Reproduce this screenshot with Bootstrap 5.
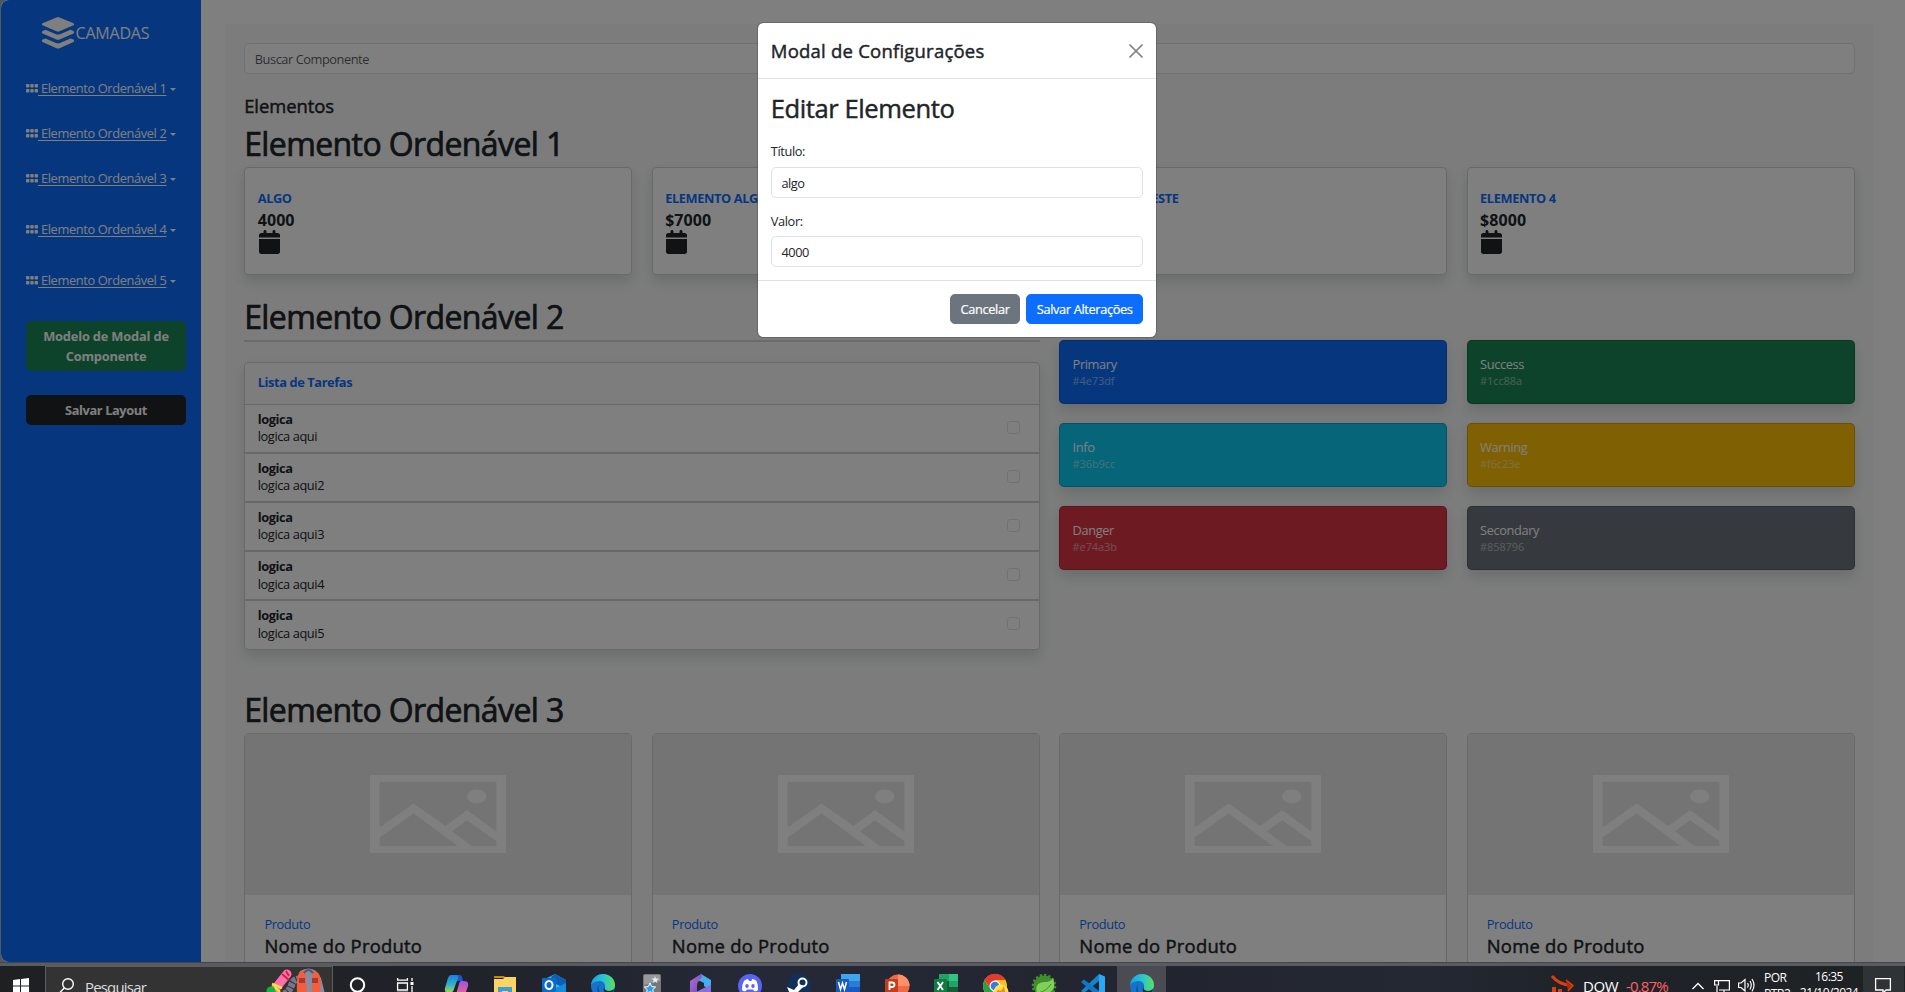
<!DOCTYPE html>
<html lang="pt-BR">
<head>
<meta charset="utf-8">
<title>Camadas</title>
<link rel="stylesheet" href="https://cdn.jsdelivr.net/npm/bootstrap@5.3.0/dist/css/bootstrap.min.css">
<style>
html{font-size:12.8px}
body{font-family:"Open Sans","Noto Sans",sans-serif;letter-spacing:-.03em;height:992px;overflow:hidden;background:#55565c}
.screen{height:962px;border-radius:8px 0 0 8px;margin-left:1px;background:#fff;position:relative;overflow:hidden}
.screen h1,.screen h2,.screen h5{-webkit-text-stroke:.45px currentColor}
.screen h1{font-size:32px;line-height:38.4px;letter-spacing:-.019em;margin:0;-webkit-text-stroke-width:.7px;height:42px}
.side{width:200px;flex:none;padding:16px 15px 0 25px;height:962px}
.brand-row{font-size:16px;height:34px;padding-left:14.5px;letter-spacing:-.012em}
.side-link{height:20px;color:#fff;white-space:nowrap;line-height:20px;margin-top:25px}
.side-link svg{margin-bottom:2px}
.side-link u{white-space:pre;text-underline-offset:2px;letter-spacing:-.028em}
.side-link.dropdown-toggle::after{margin-left:4px;border-top-width:3px;border-left-width:3px;border-right-width:3px;vertical-align:2px}
.side .btn{width:160px;letter-spacing:-.012em;line-height:20px;padding:4px 8px}
.side .btn-success{height:50px;margin-top:31px}
.side .btn-dark{height:30px;margin-top:24px;letter-spacing:-.03em}
.main-pad{width:1697px;flex:none;padding:24px}
.panel{height:1100px;padding:19px 9.6px 0}
.panel .row{--bs-gutter-x:19.2px}
.inner{padding:0 9.6px}
.form-control{letter-spacing:-.035em}
.search-box{height:31px}
.section-name{font-size:18.4px;line-height:21px;letter-spacing:-.003em;margin:20.5px 0 9.5px}
.stat{height:108px;padding:20px 12.5px;line-height:1}
.stat .name{font-weight:700;color:#0d6efd;height:21px;line-height:20px;text-transform:uppercase;letter-spacing:-.03em}
.stat .amount{font-size:16px;font-weight:700;line-height:21px;height:20px;letter-spacing:.005em;margin-top:2px}
.stat svg{display:block}
.rule{height:2px;background:#d5d6d8}
.tasks{height:288.5px}
.tasks .head{height:42px;flex:none;padding:0 12.5px;background:#fbfbfb;border-bottom:1px solid #cfcfcf}
.task{height:49.2px;flex:none;padding:6px 19px 0 12.5px;border-bottom:2px solid #d0d0d0;line-height:17.5px}
.task:last-child{border-bottom:0;height:46.5px}
.task .form-check-input{width:13px;height:13px;margin:10px 0 0}
.tone{height:64px;padding:14px 12.5px;line-height:19px}
.tone small{display:block;font-size:11px;line-height:13px;opacity:.5;letter-spacing:-.01em}
.ph{height:161px;background:#e9e9e9;border-radius:4px 4px 0 0;padding-top:41px}
.prod{height:330px}
.prod-body{padding:20px 19.2px}
.prod-body h5{font-size:18.4px;line-height:22px;letter-spacing:.014em;margin:1px 0 0}
.cfg{width:400px;max-width:none;margin:22px 0 0 756px}
.cfg .modal-content{height:316px}
.cfg .modal-header{height:56px;padding:0 12.8px}
.cfg h5{font-size:18.5px;letter-spacing:.012em;margin-bottom:0}
.cfg .modal-body{padding:14px 12.8px 0}
.cfg h2{font-size:25.6px;line-height:31px;letter-spacing:-.017em;margin-bottom:18px}
.cfg label{display:block;height:25px;line-height:19px}
.cfg .form-control{height:31px}
.cfg .modal-footer{height:57px;padding:0 12.8px;gap:6px}
.cfg .btn{height:30px;padding:0 9.6px;line-height:28px;letter-spacing:-.028em;-webkit-text-stroke:.2px #fff}
.dim{inset:0;background:rgba(0,0,0,.5);z-index:3}
.edge-line{height:4px;background:linear-gradient(#45464b 1px,#5a5b61 1px)}
.taskbar{height:26px;overflow:hidden;background:linear-gradient(90deg,#1f2022,#20232a 25%,#252937 40%,#22252f 60%,#242833 75%,#1f2329 82%,#1e2224);color:#fff;letter-spacing:0}
.taskbar svg{display:block;overflow:visible}
.slot{width:49px;height:26px;flex:none;padding-top:8px}
.slot svg{margin:0 auto}
.slot.on{background:#4b4c53}
.find{width:288px;height:26px;background:#333;border:1px solid #5c5c5c;border-bottom:0}
.tray{white-space:nowrap}
.tiny{font-size:12px;line-height:16px;letter-spacing:-.045em}
</style>
</head>
<body>
<svg width="0" height="0" class="position-absolute">
<defs>
<linearGradient id="ge" x1="0" y1="0" x2="1" y2="0"><stop offset="0" stop-color="#1b9de0"/><stop offset=".5" stop-color="#27c3d5"/><stop offset="1" stop-color="#5be05a"/></linearGradient>
<linearGradient id="gp" x1="0" y1="0" x2="1" y2="1"><stop offset="0" stop-color="#b36bd8"/><stop offset="1" stop-color="#6a48b0"/></linearGradient>
<linearGradient id="gc" x1="0" y1="0" x2="0" y2="1"><stop offset="0" stop-color="#1a7fe0"/><stop offset=".55" stop-color="#2fb5c9"/><stop offset="1" stop-color="#b5d438"/></linearGradient>
<linearGradient id="gd" x1="0" y1="0" x2="0" y2="1"><stop offset="0" stop-color="#a24fe8"/><stop offset="1" stop-color="#fb6f75"/></linearGradient>
</defs>
<symbol id="grip" viewBox="0 0 12 9"><g fill="#fff"><rect width="3.4" height="3.6" rx=".8"/><rect x="4.3" width="3.4" height="3.6" rx=".8"/><rect x="8.6" width="3.4" height="3.6" rx=".8"/><rect y="5" width="3.4" height="3.6" rx=".8"/><rect x="4.3" y="5" width="3.4" height="3.6" rx=".8"/><rect x="8.6" y="5" width="3.4" height="3.6" rx=".8"/></g></symbol>
<symbol id="cal" viewBox="0 0 448 512"><path fill="#212529" d="M128 0c17.700 0 32 14.300 32 32V64H288V32c0-17.700 14.300-32 32-32s32 14.300 32 32V64h48c26.500 0 48 21.500 48 48v48H0V112C0 85.500 21.500 64 48 64H96V32c0-17.700 14.300-32 32-32zM0 192H448V464c0 26.500-21.500 48-48 48H48c-26.500 0-48-21.500-48-48V192z"/></symbol>
<symbol id="pic" viewBox="0 0 381 233" preserveAspectRatio="none"><path fill="#fff" fill-rule="evenodd" d="M0 0H381V233H0zM27 20V157L122 85L211 152L272 105L354 169V20zM27 187V212H246L122 114zM284 212H354V197L272 135L229 168z"/><ellipse cx="299" cy="64" rx="27" ry="21" fill="#fff"/></symbol>
<symbol id="edge" viewBox="0 0 24 24"><circle cx="12" cy="12" r="12" fill="#1673c8"/><path fill="url(#ge)" d="M0 11C1 4 6 0 12 0c7 0 12 5 12 11 0 4-3 6-6 6-4 0-5-2-4-4 1-3-2-6-5-6-4 0-7 1-9 4z"/><path fill="#0c4f9a" d="M9 10c-3 3-1 9 4 13-7-1-9-9-4-13z"/><path fill="#22252f" d="M14 12.500c-1 2 0 4.500 4 4.500 2 0 4-1 5-2-1 4-4 5-7 4.500-4-1-4-5-2-7z"/></symbol>
</svg>

<div class="screen">
  <div class="d-flex">
    <aside class="side bg-primary text-white">
      <div class="brand-row d-flex align-items-center">
        <svg width="34" height="34" viewBox="0 0 34 34" fill="#fff"><path d="M15.500 1.400Q17 .8 18.500 1.400L32.500 7.300Q34 8.200 32.500 9.200L18.500 15.300Q17 16 15.500 15.300L1.500 9.200Q0 8.200 1.500 7.300z"/><path id="ly" d="M1.500 14.900L4.500 13.700L15 18.200Q17 19 19 18.200L29.500 13.700L32.500 14.900Q34 15.900 32.500 17.400L18.500 23.500Q17 24.200 15.500 23.500L1.500 17.400Q0 16.400 1.500 14.900z"/><use href="#ly" y="8.700"/></svg>
        <span style="margin-left:1px">CAMADAS</span>
      </div>
      <div class="side-link dropdown-toggle" style="margin-top:28px"><svg width="12" height="9"><use href="#grip"/></svg><u> Elemento Ordenável 1</u></div>
      <div class="side-link dropdown-toggle"><svg width="12" height="9"><use href="#grip"/></svg><u> Elemento Ordenável 2</u></div>
      <div class="side-link dropdown-toggle"><svg width="12" height="9"><use href="#grip"/></svg><u> Elemento Ordenável 3</u></div>
      <div class="side-link dropdown-toggle" style="margin-top:31px"><svg width="12" height="9"><use href="#grip"/></svg><u> Elemento Ordenável 4</u></div>
      <div class="side-link dropdown-toggle" style="margin-top:31px"><svg width="12" height="9"><use href="#grip"/></svg><u> Elemento Ordenável 5</u></div>
      <button class="btn btn-success fw-bold">Modelo de Modal de Componente</button>
      <button class="btn btn-dark fw-bold">Salvar Layout</button>
    </aside>

    <main class="main-pad">
      <div class="panel bg-light">
        <div class="inner">
          <input class="form-control search-box" placeholder="Buscar Componente">
          <h5 class="section-name">Elementos</h5>
          <h1>Elemento Ordenável 1</h1>
        </div>
        <div class="row mx-0">
          <div class="col-3"><div class="card shadow stat"><div class="name">algo</div><div class="amount">4000</div><svg width="23" height="26"><use href="#cal"/></svg></div></div>
          <div class="col-3"><div class="card shadow stat"><div class="name">Elemento algo</div><div class="amount">$7000</div><svg width="23" height="26"><use href="#cal"/></svg></div></div>
          <div class="col-3"><div class="card shadow stat"><div class="name">Elemento &nbsp;teste</div></div></div>
          <div class="col-3"><div class="card shadow stat"><div class="name">Elemento 4</div><div class="amount">$8000</div><svg width="23" height="26"><use href="#cal"/></svg></div></div>
        </div>
        <div class="inner" style="padding-top:22.500px"><h1>Elemento Ordenável 2</h1></div>
        <div class="row mx-0" style="height:372px">
          <div class="col-6">
            <div class="rule"></div>
            <div class="card shadow tasks" style="margin-top:20px">
              <div class="head d-flex align-items-center fw-bold text-primary rounded-top">Lista de Tarefas</div>
              <div class="task d-flex justify-content-between"><div><b>logica</b><br>logica aqui</div><input type="checkbox" class="form-check-input"></div>
              <div class="task d-flex justify-content-between"><div><b>logica</b><br>logica aqui2</div><input type="checkbox" class="form-check-input"></div>
              <div class="task d-flex justify-content-between"><div><b>logica</b><br>logica aqui3</div><input type="checkbox" class="form-check-input"></div>
              <div class="task d-flex justify-content-between"><div><b>logica</b><br>logica aqui4</div><input type="checkbox" class="form-check-input"></div>
              <div class="task d-flex justify-content-between"><div><b>logica</b><br>logica aqui5</div><input type="checkbox" class="form-check-input"></div>
            </div>
          </div>
          <div class="col-6">
            <div class="row align-content-start" style="--bs-gutter-y:19.200px">
              <div class="col-6"><div class="card shadow tone bg-primary text-white">Primary<small>#4e73df</small></div></div>
              <div class="col-6"><div class="card shadow tone bg-success text-white">Success<small>#1cc88a</small></div></div>
              <div class="col-6"><div class="card shadow tone bg-info text-white">Info<small>#36b9cc</small></div></div>
              <div class="col-6"><div class="card shadow tone bg-warning text-white">Warning<small>#f6c23e</small></div></div>
              <div class="col-6"><div class="card shadow tone bg-danger text-white">Danger<small>#e74a3b</small></div></div>
              <div class="col-6"><div class="card shadow tone bg-secondary text-white">Secondary<small>#858796</small></div></div>
            </div>
          </div>
        </div>
        <div class="inner" style="margin-top:-21px"><h1>Elemento Ordenável 3</h1></div>
        <div class="row mx-0" id="products"></div>
      </div>
    </main>
  </div>

  <div class="dim position-absolute"></div>

  <div class="modal d-block position-absolute overflow-hidden">
    <div class="modal-dialog cfg">
      <div class="modal-content">
        <div class="modal-header">
          <h5 class="modal-title">Modal de Configurações</h5>
          <svg width="14" height="14" viewBox="0 0 14 14" stroke="#7f7f7f" stroke-width="1.700" stroke-linecap="round"><path d="M1 1L13 13M13 1L1 13"/></svg>
        </div>
        <div class="modal-body">
          <h2>Editar Elemento</h2>
          <label>Título:</label>
          <input class="form-control" value="algo">
          <label style="margin-top:14px;height:24px">Valor:</label>
          <input class="form-control" value="4000">
        </div>
        <div class="modal-footer">
          <button class="btn btn-secondary m-0">Cancelar</button>
          <button class="btn btn-primary m-0">Salvar Alterações</button>
        </div>
      </div>
    </div>
  </div>
</div>
<div class="edge-line"></div>

<div class="taskbar d-flex">
  <div style="width:45px;padding:12px 0 0 13px"><svg width="16" height="16" fill="#fff"><path d="M0 2L7 1V7.500H0zM8 .9L16 0V7.500H8zM0 8.500H7V15L0 14zM8 8.500H16V16L8 15z"/></svg></div>
  <div class="find d-flex">
    <svg width="16" height="16" style="margin:11px 0 0 13px" fill="none" stroke="#fff" stroke-width="1.400"><circle cx="9" cy="6" r="5.300"/><path d="M5.200 10L0 15.500"/></svg>
    <span style="font-size:15px;line-height:20px;letter-spacing:-.055em;margin:10px 0 0 10px;width:150px;color:#ddd">Pesquisar</span>
    <svg width="60" height="24" style="margin:2px 0 0 31px"><path d="M6 24L21 5" stroke="#ff6fb0" stroke-width="9" stroke-linecap="round"/><path d="M6 15l10 4M8 18l6 5" stroke="#ffe13b" stroke-width="2.500"/><path d="M16 5l7 6M20 2l3 5" stroke="#d51e3c" stroke-width="1.800"/><circle cx="5" cy="22" r="4.500" fill="#10b53c"/><path d="M18 25Q24 22 26 15Q28 10 33 10" fill="none" stroke="#77778c" stroke-width="7" stroke-dasharray="4 1"/><path d="M34 2Q43-3 50 2L55 9L59 25H32z" fill="#8c8ba0"/><path d="M35 2Q30 4 31 24H41L39 2zM47 2L46 24H54Q56 5 51 3z" fill="#f35e3d"/><path d="M33 9h6v5h-6zM46 9h6v5h-6z" fill="#a33b34"/><path d="M38 4Q42-2 47 4" fill="none" stroke="#55566b" stroke-width="2"/></svg>
  </div>
  <div class="slot"><svg width="16" height="16" style="margin-top:3px" fill="none" stroke="#fff" stroke-width="2"><circle cx="7.500" cy="8" r="6.700"/></svg></div>
  <div class="slot"><svg width="16" height="18" style="margin-top:4px;transform:translateX(-2px)" fill="none" stroke="#fff" stroke-width="1.300"><path d="M.6 0V2.200H10.400V0M.6 5H10.400V12H.6zM.6 18V14.500H10.400V18M15 0V3M15 8V18"/><rect x="13.500" y="4" width="3" height="3" fill="#fff" stroke="none"/></svg></div>
  <div class="slot"><svg width="24" height="24"><path d="M8 1h8q2 0 3 6h-6l-2-3z" fill="#1659c7"/><path d="M7 1h5q3 0 2 3L10 15Q9 19 5 19 0 19 1 14L4 4Q5 1 7 1z" fill="url(#gc)"/><path d="M17 7h3q5 0 4 5l-3 9q-1 3-4 3h-6L15 10q.500-3 2-3z" fill="url(#gd)"/></svg></div>
  <div class="slot"><svg width="22" height="20" style="margin-top:2px"><path d="M0 0H10L12 2H0z" fill="#c58c05"/><path d="M0 3H9l2-2H22V20H0z" fill="#fcd462"/><path d="M4 20V11H18V20H14V15H8V20z" fill="#3d9ddd"/></svg></div>
  <div class="slot"><svg width="24" height="24"><path d="M3 5L13 0L24 6V24H3z" fill="#29b7f1"/><path d="M9 3L13 0L24 6V15L14 10z" fill="#0d5eb5"/><path d="M14 14L24 9V24H10z" fill="#168cdd"/><rect y="4" width="14" height="14" rx="1" fill="#0a6cc6"/><ellipse cx="7" cy="11" rx="3.500" ry="4" fill="none" stroke="#fff" stroke-width="2"/></svg></div>
  <div class="slot"><svg width="24" height="24"><use href="#edge"/></svg></div>
  <div class="slot"><svg width="18" height="24"><rect width="18" height="24" rx="2" fill="#777"/><path d="M1 1H17V7L1 11z" fill="#999"/><path d="M12 2l1 2.500 3 .2-2.300 1.800.8 2.500-2.500-1.500L9.800 9l.8-2.700-2.300-1.700 2.900-.1z" fill="#d9f1ff"/><path d="M7 9l1.700 3.600 4 .4-3 2.700 1 4L7 17.500l-3.700 2.200 1-4-3-2.700 4-.4z" fill="#2a9bf0" stroke="#fff"/></svg></div>
  <div class="slot"><svg width="21" height="24"><path d="M0 7L11 0Q15 3 10 6Q7 8 7 12V18L0 22z" fill="url(#gp)"/><path d="M11 0L21 6V17L14 12V9L8 6Q14 4 11 0z" fill="#45aef0"/><path d="M21 11V18L11 23L4 19L14 14z" fill="#8870d8"/></svg></div>
  <div class="slot"><svg width="24" height="24"><circle cx="12" cy="12" r="12" fill="#5865f2"/><path d="M6 7Q8 5 10 5L11 7H13.500L14 5Q16.500 5 18.500 7Q20.500 11 20 16Q18 18 16 17L15 15.500H9L8 17Q5.500 18 4 16Q3.500 11 6 7z" fill="#fff"/><ellipse cx="9" cy="12" rx="1.700" ry="2" fill="#5865f2"/><ellipse cx="15" cy="12" rx="1.700" ry="2" fill="#5865f2"/></svg></div>
  <div class="slot"><svg width="24" height="24"><circle cx="12" cy="12" r="12" fill="#10305a"/><circle cx="15.500" cy="8.500" r="4" fill="none" stroke="#fff" stroke-width="2"/><path d="M0 13L7 16L12 10L17 12L9 20H3z" fill="#fff"/></svg></div>
  <div class="slot"><svg width="24" height="24"><rect x="5" width="19" height="24" rx="1.500" fill="#185abd"/><path d="M5 0H24V7H5z" fill="#41a5ee"/><path d="M5 7H24V13H5z" fill="#2b7cd3"/><rect y="5" width="13" height="14" rx="1" fill="#185abd"/><path d="M2.500 8L4.500 15.500L6.500 9L8.500 15.500L10.500 8" fill="none" stroke="#fff" stroke-width="1.500"/></svg></div>
  <div class="slot"><svg width="24" height="24"><circle cx="13" cy="12" r="11.500" fill="#ed6c47"/><path d="M13 .5A11.500 11.500 0 0 1 24.500 12H13z" fill="#ff8f6b"/><rect y="5" width="13" height="14" rx="1" fill="#c43e1c"/><path d="M4.500 16V8.500H7Q9.500 8.500 9.500 10.700T7 13H4.500" fill="none" stroke="#fff" stroke-width="1.800"/></svg></div>
  <div class="slot"><svg width="24" height="24"><rect x="5" width="19" height="24" rx="1.500" fill="#185c37"/><path d="M5 0H15V7H5z" fill="#21a366"/><path d="M15 0H24V7H15z" fill="#33c481"/><path d="M15 7H24V13H15z" fill="#21a366"/><rect y="5" width="13" height="14" rx="1" fill="#107c41"/><path d="M3.500 8L9 16M9 8L3.500 16" stroke="#fff" stroke-width="1.900"/></svg></div>
  <div class="slot"><svg width="24" height="24"><circle cx="12" cy="12" r="12" fill="#fbc116"/><path d="M1.500 6A12 12 0 0 1 22.500 6H12L7 14z" fill="#e33b2e"/><path d="M1.500 6A12 12 0 0 0 8 23L10 17L6 13z" fill="#27a14b"/><circle cx="12" cy="12" r="5.500" fill="#fff"/><circle cx="12" cy="12" r="4.300" fill="#2f7de9"/><circle cx="18" cy="18" r="7.500" fill="#ffe14d"/><path d="M12 20l3-4 3 1 3-5 1 6 2 2z" fill="#f08a24"/></svg></div>
  <div class="slot"><svg width="24" height="24"><circle cx="12" cy="12" r="10.500" fill="#3f8f2b"/><circle cx="12" cy="12" r="11" fill="none" stroke="#3f8f2b" stroke-width="2.500" stroke-dasharray="2.300 2"/><path d="M5 19Q2 8 13 8Q19 8 21 4Q25 16 16 19Q10 21 5 19z" fill="#84cf5c"/><path d="M6 19Q15 17 19 10" stroke="#3f8f2b" fill="none"/></svg></div>
  <div class="slot"><svg width="24" height="24"><path d="M18 0L24 2.500V22L18 24z" fill="#2aa9f2"/><path d="M18 0V7L3 19L0 17z" fill="#1583cf"/><path d="M0 8L3 5.500L18 17V24z" fill="#0f78c5"/></svg></div>
  <div class="slot on"><svg width="24" height="24"><use href="#edge"/></svg></div>
  <div class="tray d-flex flex-grow-1" style="padding-left:386px">
    <svg width="22" height="18" style="margin-top:9px" fill="none" stroke="#d8400f" stroke-width="3"><path d="M0 1Q7 10 19 10"/><path d="M14 5L21 10.500L16 16" fill="#b02a0c" stroke-width="1.500"/><path d="M2 12V20M8 14V20" stroke-width="4"/></svg>
    <span style="font-size:15px;line-height:20px;margin:10px 0 0 9px;width:43px;letter-spacing:-.03em">DOW</span>
    <span style="font-size:15px;line-height:20px;margin-top:10px;width:66px;letter-spacing:-.055em;color:#ff6065">-0,87%</span>
    <svg width="12" height="8" style="margin-top:16px" fill="none" stroke="#fff" stroke-width="1.400"><path d="M.5 7L6 1.500L11.500 7"/></svg>
    <svg width="16" height="14" style="margin:14px 0 0 10px" fill="none" stroke="#fff" stroke-width="1.200"><path d="M5 .6H15.400V10H5M10 10V14M3 6V13"/><path d="M.6.600H4.500V5H.6z"/></svg>
    <svg width="17" height="14" style="margin:12px 0 0 8px" fill="none" stroke="#fff" stroke-width="1.200"><path d="M.6 5H3L7 1.500V13L3 9.500H.6zM9.500 5Q11 7 9.500 9.500M12 3Q14.500 7 12 11.500M14 1Q18 7 14 13.500"/></svg>
    <div class="tiny" style="width:34px;margin:4px 0 0 9px">POR<br>PTB2</div>
    <div class="tiny text-center" style="width:62px;margin-top:3px">16:35<br>21/10/2024</div>
    <div style="width:41px;margin-left:3px;background:#2f3335;padding:12px 0 0 12px"><svg width="16" height="15" fill="none" stroke="#fff" stroke-width="1.300"><path d="M.6.600H15.400V12H11L8 15V12H.6z"/></svg></div>
  </div>
</div>
<script src="https://cdn.jsdelivr.net/npm/bootstrap@5.3.0/dist/js/bootstrap.bundle.min.js"></script>
<script>
document.getElementById('products').innerHTML = Array(4).fill(
 '<div class="col-3"><div class="card prod"><div class="ph d-flex justify-content-center"><svg width="136" height="78"><use href="#pic"/></svg></div>' +
 '<div class="prod-body"><div class="text-primary" style="line-height:19px">Produto</div><h5>Nome do Produto</h5></div></div></div>').join('');
</script>
</body>
</html>
